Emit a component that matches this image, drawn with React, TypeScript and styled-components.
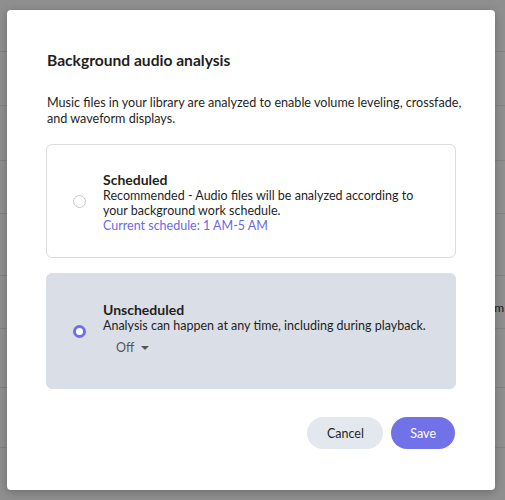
import { createGlobalStyle } from 'styled-components';
import styled from 'styled-components';

const GlobalStyle = createGlobalStyle`
  * {
    box-sizing: border-box;
  }

  body {
    margin: 0;
    font-family: Lato, 'Noto Sans', sans-serif;
    background: #fff;
  }
`;

const Page = styled.div`
  width: 505px;
  height: 500px;
  position: relative;
  overflow: hidden;
`;

const BackRows = styled.div`
  display: flex;
  flex-direction: column;
  padding-top: 51px;
`;

const BackRow = styled.div<{ $h: number }>`
  height: ${(p) => p.$h}px;
  border-top: 1px solid #e6e6e6;
  display: flex;
  align-items: center;
  justify-content: flex-end;
  padding: 10px 1px 0 0;
  font-size: 12px;
  color: #333;
`;

const Overlay = styled.div`
  position: absolute;
  inset: 0;
  background: rgba(0, 0, 0, 0.44);
  padding: 10px 10px 10px 7px;
`;

const Dialog = styled.div`
  width: 488px;
  height: 480px;
  background: #fff;
  border-radius: 4px;
  box-shadow: 0 2px 8px rgba(0, 0, 0, 0.25);
  padding: 40px 39px;
  display: flex;
  flex-direction: column;
`;

const Title = styled.h2`
  margin: 0 0 25px;
  padding-left: 1px;
  font-size: 15.6px;
  line-height: 20px;
  font-weight: 700;
  color: #1f1f1f;
`;

const Description = styled.p`
  margin: 0 0 17px;
  padding-left: 1px;
  font-size: 12.6px;
  line-height: 16px;
  white-space: nowrap;
  color: #1f1f1f;
`;

const Options = styled.div`
  display: flex;
  flex-direction: column;
  gap: 15px;
`;

const Option = styled.label<{ $selected: boolean; $h: number }>`
  display: flex;
  align-items: center;
  height: ${(p) => p.$h}px;
  padding-left: 26px;
  gap: 17px;
  border-radius: 6px;
  border: 1px solid ${(p) => (p.$selected ? '#dadee6' : '#dcdcdc')};
  background: ${(p) => (p.$selected ? '#dadee6' : '#fff')};
  cursor: pointer;
`;

const Radio = styled.span<{ $checked: boolean }>`
  flex: none;
  width: 13px;
  height: 13px;
  border-radius: 50%;
  background: ${(p) => (p.$checked ? '#fff' : 'transparent')};
  border: ${(p) => (p.$checked ? '3.5px solid #6f6fe8' : '1.5px solid #c8c8c8')};
`;

const OptionBody = styled.div<{ $shift?: number }>`
  display: flex;
  flex-direction: column;
  padding-top: ${(p) => p.$shift ?? 0}px;
  font-size: 12.5px;
  line-height: 15.4px;
  color: #1f1f1f;
`;

const OptionTitle = styled.div`
  font-size: 14px;
  font-weight: 700;
`;

const Link = styled.span`
  color: #6a6ae6;
`;

const Dropdown = styled.div`
  display: flex;
  align-items: center;
  gap: 7px;
  height: 24px;
  margin-top: 3px;
  padding-left: 13px;
  color: #555;
`;

const Caret = styled.span`
  width: 0;
  height: 0;
  border-left: 4px solid transparent;
  border-right: 4px solid transparent;
  border-top: 4px solid #555;
`;

const Footer = styled.div`
  margin-top: 28px;
  display: flex;
  justify-content: flex-end;
  gap: 8px;
  padding-right: 1px;
`;

const Button = styled.button<{ $primary?: boolean }>`
  height: 32px;
  padding: 0 ${(p) => (p.$primary ? 19 : 19.5)}px;
  border: none;
  border-radius: 16px;
  font-family: inherit;
  font-size: 12.5px;
  color: ${(p) => (p.$primary ? '#fff' : '#1f1f1f')};
  background: ${(p) => (p.$primary ? '#7272e8' : '#e3e8ef')};
  cursor: pointer;
`;

const rows = [54, 55, 53, 62, 53, 59, 60, 60];

export default function App() {
  return (
    <Page>
      <GlobalStyle />
      <BackRows>
        {rows.map((h, i) => (
          <BackRow key={i} $h={h}>
            {i === 4 ? 'm' : ''}
          </BackRow>
        ))}
      </BackRows>
      <Overlay>
        <Dialog>
          <Title>Background audio analysis</Title>
          <Description>
            Music files in your library are analyzed to enable volume leveling, crossfade,
            <br />
            and waveform displays.
          </Description>
          <Options>
            <Option $selected={false} $h={114}>
              <Radio $checked={false} />
              <OptionBody $shift={4}>
                <OptionTitle>Scheduled</OptionTitle>
                <span>
                  Recommended - Audio files will be analyzed according to
                  <br />
                  your background work schedule.
                </span>
                <Link>Current schedule: 1 AM-5 AM</Link>
              </OptionBody>
            </Option>
            <Option $selected={true} $h={116}>
              <Radio $checked={true} />
              <OptionBody>
                <OptionTitle>Unscheduled</OptionTitle>
                <span>Analysis can happen at any time, including during playback.</span>
                <Dropdown>
                  Off <Caret />
                </Dropdown>
              </OptionBody>
            </Option>
          </Options>
          <Footer>
            <Button>Cancel</Button>
            <Button $primary>Save</Button>
          </Footer>
        </Dialog>
      </Overlay>
    </Page>
  );
}
